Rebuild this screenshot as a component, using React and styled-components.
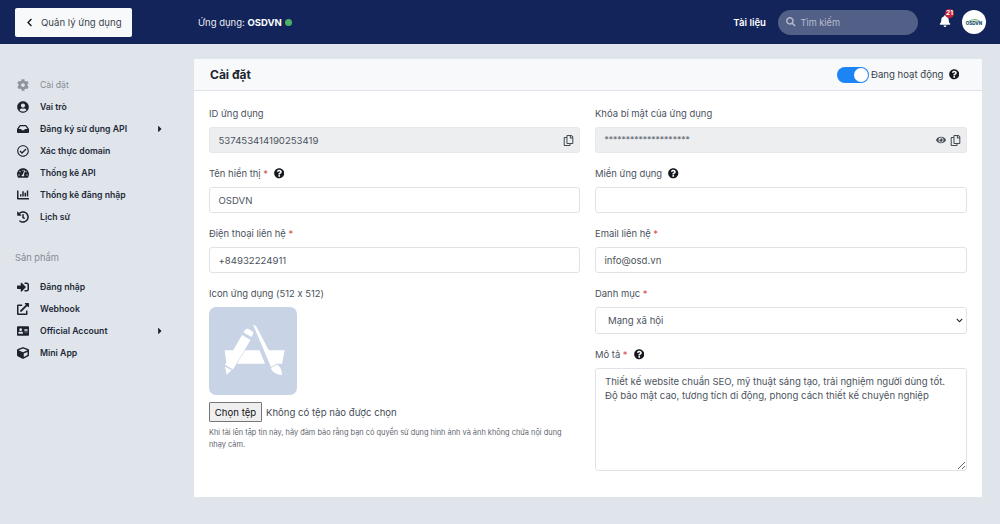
import React from 'react'
import styled, { createGlobalStyle } from 'styled-components'
import {
  FaChevronLeft,
  FaSearch,
  FaBell,
  FaCog,
  FaUserCircle,
  FaInbox,
  FaRegCheckCircle,
  FaTachometerAlt,
  FaChartBar,
  FaHistory,
  FaSignInAlt,
  FaExternalLinkAlt,
  FaAddressCard,
  FaCube,
  FaCaretRight,
  FaQuestionCircle,
  FaRegCopy,
  FaEye,
  FaChevronDown
} from 'react-icons/fa'

const GlobalStyle = createGlobalStyle`
  html, body {
    margin: 0;
    padding: 0;
    background: #e0e5ec;
    font-family: Inter, "Noto Sans", sans-serif;
    font-feature-settings: "calt" 0;
  }
  * { box-sizing: border-box; }
`

const Page = styled.div`
  width: 1000px;
  height: 524px;
  overflow: hidden;
  display: flex;
  flex-direction: column;
`

const Header = styled.header`
  height: 44px;
  background: #12245a;
  display: flex;
  align-items: center;
  padding: 0 14px 0 15px;
  flex-shrink: 0;
`

const BackButton = styled.button`
  width: 117px;
  height: 29px;
  background: #f8f9fa;
  border: none;
  border-radius: 2px;
  display: flex;
  align-items: center;
  gap: 7px;
  padding: 0 0 0 10px;
  font: 400 9.6px Inter, sans-serif;
  white-space: nowrap;
  color: #3a434f;
  svg { font-size: 9px; color: #12161c; }
`

const AppTitle = styled.div`
  margin-left: 66px;
  font-size: 9.5px;
  color: #e8ebf3;
  display: flex;
  align-items: center;
  gap: 3px;
  b { font-weight: 700; color: #fff; }
`

const StatusDot = styled.span`
  width: 7px;
  height: 7px;
  border-radius: 50%;
  background: #4fb168;
`

const HeaderRight = styled.div`
  margin-left: auto;
  display: flex;
  align-items: center;
`

const DocLink = styled.a`
  font-size: 9.6px;
  font-weight: 600;
  color: #fff;
  margin-right: 12px;
`

const SearchBox = styled.div`
  width: 140px;
  height: 25px;
  border-radius: 13px;
  background: #525f86;
  display: flex;
  align-items: center;
  gap: 5px;
  padding-left: 8px;
  font-size: 9.2px;
  color: #b9bfd0;
  svg { font-size: 9.5px; color: #b4bacb; }
`

const BellWrap = styled.div`
  position: relative;
  margin-left: 21px;
  width: 12px;
  height: 14px;
  color: #fff;
  svg { font-size: 12px; display: block; }
`

const Badge = styled.span`
  position: absolute;
  top: -6px;
  left: 6px;
  min-width: 9px;
  height: 9px;
  border-radius: 5px;
  background: #c4243a;
  color: #fff;
  font-size: 6.5px;
  font-weight: 700;
  line-height: 9px;
  text-align: center;
`

const Avatar = styled.div`
  margin-left: 11px;
  width: 24px;
  height: 24px;
  border-radius: 50%;
  background: #fff;
  display: flex;
  flex-direction: column;
  align-items: center;
  justify-content: center;
  color: #14506a;
  font-size: 4.5px;
  line-height: 5px;
  font-weight: 800;
  svg { display: block; margin-bottom: -1px; }
`

const Body = styled.div`
  flex: 1;
  display: flex;
  min-height: 0;
`

const Sidebar = styled.aside`
  width: 194px;
  flex-shrink: 0;
  padding-top: 30px;
`

const NavList = styled.nav`
  display: flex;
  flex-direction: column;
`

const NavItem = styled.div`
  height: 22px;
  display: flex;
  align-items: center;
  padding-left: 17px;
  font-size: 8.7px;
  color: ${props => props.$muted ? '#858b93' : '#1f2a37'};
  font-weight: ${props => props.$muted ? 400 : 600};
`

const NavIcon = styled.span`
  width: 23px;
  flex-shrink: 0;
  font-size: 12px;
  display: flex;
  align-items: center;
  color: ${props => props.$muted ? '#8f949b' : '#1c232c'};
`

const NavCaret = styled.span`
  position: absolute;
  left: 155px;
  font-size: 10px;
  display: flex;
  color: #1c232c;
`

const NavItemWrap = styled.div`
  position: relative;
  display: flex;
  align-items: center;
`

const NavHeading = styled.div`
  margin: 19px 0 7px 15px;
  height: 22px;
  line-height: 22px;
  font-size: 9.3px;
  color: #858b93;
`

const Card = styled.main`
  width: 788px;
  height: 438px;
  margin-top: 15px;
  background: #fff;
  display: flex;
  flex-direction: column;
`

const CardHeader = styled.div`
  height: 32px;
  background: #f7f9fb;
  border-bottom: 1px solid #dfe3e8;
  display: flex;
  align-items: center;
  padding: 0 23px 0 16px;
`

const CardTitle = styled.h2`
  margin: 0;
  font-size: 12px;
  font-weight: 700;
  color: #1d2630;
`

const ActiveToggle = styled.div`
  margin-left: auto;
  display: flex;
  align-items: center;
  font-size: 9.6px;
  color: #39424e;
  svg { margin-left: 5px; }
`

const Toggle = styled.span`
  position: relative;
  width: 32px;
  height: 16px;
  border-radius: 8px;
  background: #1d84f5;
  margin-right: 2px;
  &::after {
    content: '';
    position: absolute;
    right: 1px;
    top: 1px;
    width: 14px;
    height: 14px;
    border-radius: 50%;
    background: #fff;
  }
`

const HelpIcon = styled(FaQuestionCircle)`
  font-size: 10.5px;
  color: #15191e;
  margin-left: 6px;
  flex-shrink: 0;
`

const FormGrid = styled.div`
  display: grid;
  grid-template-columns: 371px 372px;
  column-gap: 15px;
  padding: 16px 15px 0;
`

const Column = styled.div`
  display: flex;
  flex-direction: column;
`

const Field = styled.div`
  height: ${props => props.$height || 60}px;
`

const Label = styled.label`
  height: 13px;
  margin-bottom: 7px;
  display: flex;
  align-items: center;
  font-size: 9.45px;
  color: #4a525d;
  em { color: #d9534f; font-style: normal; margin-left: 2.5px; }
`

const InputBox = styled.div`
  position: relative;
  height: 26px;
  border: 1px solid ${props => props.$disabled ? '#e6e8ea' : '#dfe2e6'};
  border-radius: 3px;
  background: ${props => props.$disabled ? '#eceef0' : '#fff'};
  display: flex;
  align-items: center;
  padding: 0 5px 0 8.5px;
  font-size: 9.6px;
  color: #4c545e;
`

const InputIcons = styled.span`
  margin-left: auto;
  display: flex;
  align-items: center;
  gap: 4px;
  color: #464c54;
  font-size: 11px;
`

const EyeIcon = styled(FaEye)`
  font-size: 10px;
`

const Masked = styled.span`
  font-size: 8.5px;
  color: #666c74;
`

const SelectBox = styled(InputBox)`
  height: 27px;
  padding: 0 3px 0 12px;
  svg { margin-left: auto; font-size: 7px; color: #222; }
`

const TextArea = styled.textarea`
  display: block;
  width: 100%;
  height: 103px;
  border: 1px solid #dfe2e6;
  border-radius: 3px;
  padding: 6px 9px;
  font: 400 9.6px/13.5px Inter, sans-serif;
  color: #4c545e;
  resize: vertical;
  outline: none;
`

const AppIconBox = styled.div`
  width: 88px;
  height: 88px;
  border-radius: 7px;
  background: #c8d4e6;
  display: flex;
  margin-bottom: 7px;
`

const FileRow = styled.div`
  display: flex;
  align-items: center;
  gap: 4px;
  font-size: 9.6px;
  color: #444c56;
`

const FileButton = styled.button`
  height: 20px;
  width: 53px;
  padding: 0;
  border: 1px solid #767676;
  border-radius: 1px;
  background: #efefef;
  font: 400 9.6px Inter, sans-serif;
  color: #111;
`

const HelpText = styled.p`
  margin: 5px 0 0;
  font-size: 7.4px;
  line-height: 12px;
  color: #5f666f;
`

const AppStoreGlyph = () => (
  <svg width="88" height="88" viewBox="0 0 88 88" fill="#fff">
    <path d="M15.700 43.300H29L21 56.700H17.500z" />
    <path d="M36 43.300H50.500L56 56.700H28z" />
    <path d="M55 43.300H75.700L73 56.700H61z" />
    <path d="M33 28l8.500 5-17.500 29.500-8-4.800z" />
    <path d="M34.500 25.500l1.500-2.500c.8-1.300 2.300-1.600 3.500-.9l3.500 2c1.300.8 1.600 2.300.9 3.500L42.500 30z" />
    <path d="M16 59.500l6.500 3.800-5 4.500z" />
    <path d="M44 17.500l3 1.500 20 38-5 3z" />
    <path d="M62 61l6-3.500c3 1.800 4.700 5 5 10.500-5-.3-10-2.500-11-7z" />
  </svg>
)

const LogoArc = () => (
  <svg width="14" height="4" viewBox="0 0 14 4">
    <path d="M1 3.500C4 .8 10 .5 13 3 9 1.800 5 1.800 1 3.500z" fill="#5aa55f" />
  </svg>
)

const menu = [
  { icon: <FaCog />, label: 'Cài đặt', muted: true },
  { icon: <FaUserCircle />, label: 'Vai trò' },
  { icon: <FaInbox />, label: 'Đăng ký sử dụng API', caret: true },
  { icon: <FaRegCheckCircle />, label: 'Xác thực domain' },
  { icon: <FaTachometerAlt />, label: 'Thống kê API' },
  { icon: <FaChartBar />, label: 'Thống kê đăng nhập' },
  { icon: <FaHistory />, label: 'Lịch sử' }
]

const products = [
  { icon: <FaSignInAlt />, label: 'Đăng nhập' },
  { icon: <FaExternalLinkAlt />, label: 'Webhook' },
  { icon: <FaAddressCard />, label: 'Official Account', caret: true },
  { icon: <FaCube />, label: 'Mini App' }
]

const renderItem = item => (
  <NavItemWrap key={item.label}>
    <NavItem $muted={item.muted}>
      <NavIcon $muted={item.muted}>{item.icon}</NavIcon>
      {item.label}
    </NavItem>
    {item.caret && <NavCaret><FaCaretRight /></NavCaret>}
  </NavItemWrap>
)

export default function App() {
  return (
    <Page>
      <GlobalStyle />
      <Header>
        <BackButton><FaChevronLeft />Quản lý ứng dụng</BackButton>
        <AppTitle>
          <span>Ứng dụng: <b>OSDVN</b></span>
          <StatusDot />
        </AppTitle>
        <HeaderRight>
          <DocLink>Tài liệu</DocLink>
          <SearchBox><FaSearch />Tìm kiếm</SearchBox>
          <BellWrap>
            <FaBell />
            <Badge>21</Badge>
          </BellWrap>
          <Avatar><LogoArc />OSDVN</Avatar>
        </HeaderRight>
      </Header>
      <Body>
        <Sidebar>
          <NavList>{menu.map(renderItem)}</NavList>
          <NavHeading>Sản phẩm</NavHeading>
          <NavList>{products.map(renderItem)}</NavList>
        </Sidebar>
        <Card>
          <CardHeader>
            <CardTitle>Cài đặt</CardTitle>
            <ActiveToggle>
              <Toggle />
              Đang hoạt động
              <FaQuestionCircle color="#15191e" size="10.5px" />
            </ActiveToggle>
          </CardHeader>
          <FormGrid>
            <Column>
              <Field>
                <Label>ID ứng dụng</Label>
                <InputBox $disabled>
                  537453414190253419
                  <InputIcons><FaRegCopy /></InputIcons>
                </InputBox>
              </Field>
              <Field>
                <Label>Tên hiển thị <em>*</em><HelpIcon /></Label>
                <InputBox>OSDVN</InputBox>
              </Field>
              <Field>
                <Label>Điện thoại liên hệ <em>*</em></Label>
                <InputBox>+84932224911</InputBox>
              </Field>
              <Field>
                <Label>Icon ứng dụng (512 x 512)</Label>
                <AppIconBox><AppStoreGlyph /></AppIconBox>
                <FileRow>
                  <FileButton>Chọn tệp</FileButton>
                  Không có tệp nào được chọn
                </FileRow>
                <HelpText>
                  Khi tải lên tập tin này, hãy đảm bảo rằng bạn có quyền sử dụng hình ảnh và ảnh không chứa nội dung nhạy cảm.
                </HelpText>
              </Field>
            </Column>
            <Column>
              <Field>
                <Label>Khóa bí mật của ứng dụng</Label>
                <InputBox $disabled>
                  <Masked>********************</Masked>
                  <InputIcons><EyeIcon /><FaRegCopy /></InputIcons>
                </InputBox>
              </Field>
              <Field>
                <Label>Miền ứng dụng<HelpIcon /></Label>
                <InputBox />
              </Field>
              <Field>
                <Label>Email liên hệ <em>*</em></Label>
                <InputBox>info@osd.vn</InputBox>
              </Field>
              <Field $height={61}>
                <Label>Danh mục <em>*</em></Label>
                <SelectBox>Mạng xã hội<FaChevronDown /></SelectBox>
              </Field>
              <Field $height={123}>
                <Label>Mô tả <em>*</em><HelpIcon /></Label>
                <TextArea
                  readOnly
                  value={'Thiết kế website chuẩn SEO, mỹ thuật sáng tạo, trải nghiệm người dùng tốt.\nĐộ bảo mật cao, tương tích di động, phong cách thiết kế chuyên nghiệp'}
                />
              </Field>
            </Column>
          </FormGrid>
        </Card>
      </Body>
    </Page>
  )
}
